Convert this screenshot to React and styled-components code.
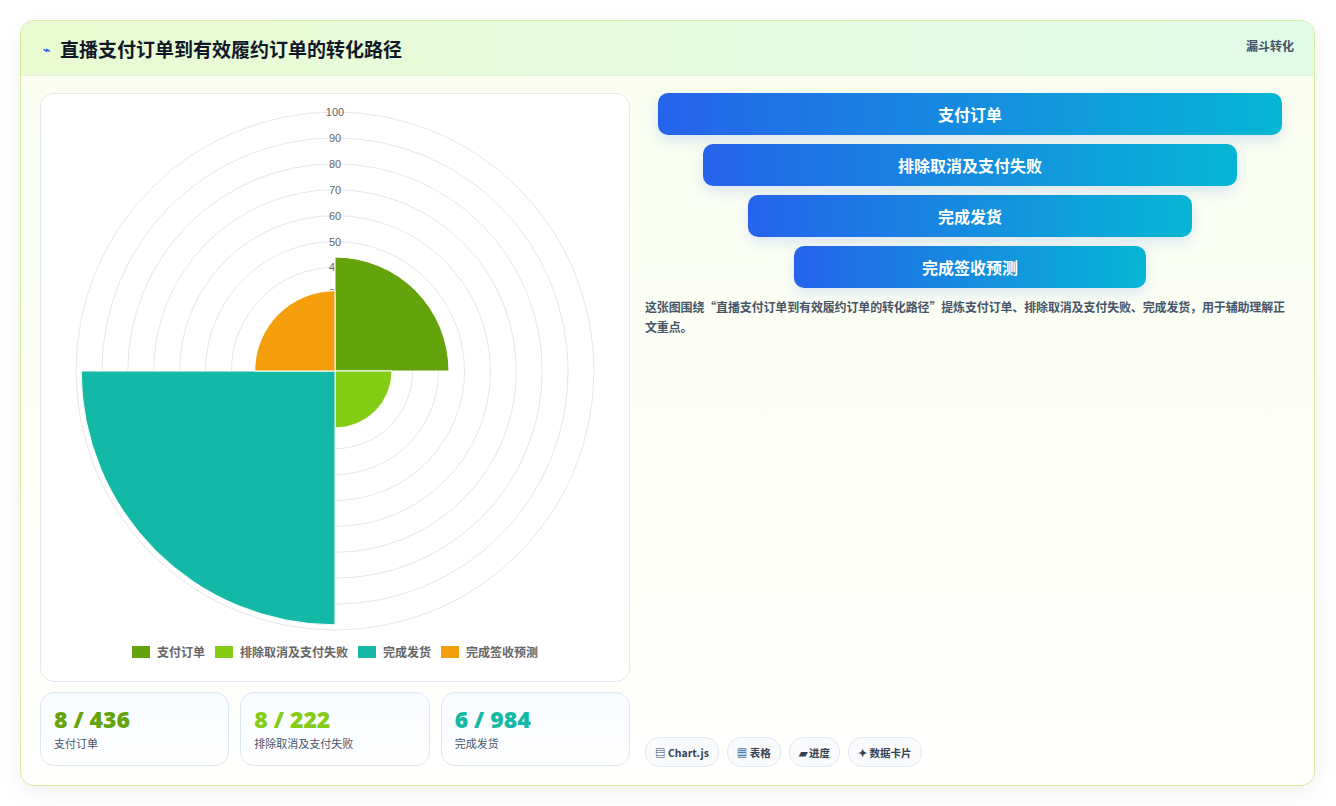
import React from "react";
import styled, { createGlobalStyle } from "styled-components";

const G = createGlobalStyle`
  body{margin:0;background:#fff;font-family:"Noto Sans CJK SC","Noto Sans",sans-serif;}
`;
const Page = styled.div`padding:20px 21px 20px 20px;`;
const Card = styled.div`
  border:1px solid #d4ec9c;border-radius:14px;overflow:hidden;height:766px;box-sizing:border-box;
  background:linear-gradient(180deg,#f9fdef 0%,#fdfff7 60%,#fffffd 100%);
  box-shadow:0 8px 24px rgba(0,0,0,0.06);display:flex;flex-direction:column;
`;
const Header = styled.div`
  height:54px;flex:none;display:flex;align-items:center;justify-content:space-between;
  padding:0 20px 0 22px;border-bottom:1px solid #e3f0d8;
  background:linear-gradient(90deg,#eafbd2,#e0fbe8);
`;
const Title = styled.h1`margin:0;font-size:19px;font-weight:700;color:#111827;display:flex;align-items:center;gap:10px;`;
const Tag = styled.span`font-size:12px;font-weight:700;color:#475569;align-self:flex-start;margin-top:16px;`;
const Body = styled.div`flex:1;display:grid;grid-template-columns:590px 1fr;gap:15px;padding:17px 20px 18px 19px;`;
const Left = styled.div`display:flex;flex-direction:column;gap:10px;`;
const ChartBox = styled.div`
  height:589px;border:1px solid #e2e8f0;border-radius:14px;background:#fff;box-sizing:border-box;
  display:flex;flex-direction:column;align-items:center;
`;
const Legend = styled.div`display:flex;gap:10px;font-size:12px;font-weight:700;color:#666;margin-top:4px;`;
const LItem = styled.span`display:flex;align-items:center;gap:7px;`;
const Sw = styled.i`width:18px;height:12px;background:${p=>p.c};display:inline-block;`;
const Stats = styled.div`display:grid;grid-template-columns:repeat(3,1fr);gap:11px;`;
const Stat = styled.div`
  height:74px;border:1px solid #dbe7f3;border-radius:14px;box-sizing:border-box;padding:12px 13px;
  background:linear-gradient(180deg,#f8fbff,#fff);
`;
const Num = styled.div`font-family:"Open Sans",sans-serif;font-size:23px;font-weight:800;color:${p=>p.c};line-height:28px;`;
const SLabel = styled.div`font-size:11px;color:#475569;margin-top:2px;`;
const Right = styled.div`display:flex;flex-direction:column;`;
const Funnel = styled.div`display:flex;flex-direction:column;align-items:center;gap:9px;padding:0 12px 0 13px;`;
const Bar = styled.div`
  height:42px;border-radius:10px;color:#fff;font-weight:700;font-size:16px;display:flex;align-items:center;justify-content:center;
  background:linear-gradient(90deg,#2563eb,#06b6d4);box-shadow:0 6px 14px rgba(37,99,235,0.15);
`;
const Desc = styled.p`margin:9px 0 0;font-size:12px;letter-spacing:-0.15px;line-height:20px;color:#475569;font-weight:700;`;
const Chips = styled.div`margin-top:auto;display:flex;gap:8px;`;
const Chip = styled.span`
  height:28px;padding:0 9px;border:1px solid #e2e8f0;border-radius:14px;background:#f8fafc;
  font-size:10.5px;font-weight:700;color:#334155;display:flex;align-items:center;gap:3px;
`;

const cx=294, cy=277, R=259;
const rr=v=>v/100*R;
function sector(r,a0,a1){const p=a=>[cx+r*Math.sin(a*Math.PI/180),cy-r*Math.cos(a*Math.PI/180)];const [x0,y0]=p(a0),[x1,y1]=p(a1);return `M${cx},${cy}L${x0},${y0}A${r},${r} 0 0 1 ${x1},${y1}Z`;}

function Chart(){
  const data=[[44,"#65a30d"],[22,"#84cc16"],[98,"#14b8a6"],[31,"#f59e0b"]];
  return (
    <svg width="588" height="545" viewBox="0 0 588 545">
      {Array.from({length:10},(_,i)=><circle key={i} cx={cx} cy={cy} r={rr((i+1)*10)} fill="none" stroke="#e5e7eb" strokeWidth="1"/>)}
      {Array.from({length:10},(_,i)=>{const v=(i+1)*10;return <text key={v} x={cx} y={cy-rr(v)+4} textAnchor="middle" fontSize="11" fill="#666" fontFamily="Liberation Sans, sans-serif">{v}</text>;})}
      {data.map(([v,c],i)=><path key={i} d={sector(rr(v),i*90,i*90+90)} fill={c} stroke="#fff" strokeWidth="1"/>)}
    </svg>
  );
}

export default function App(){
  return (<Page><G/><Card>
    <Header><Title><span style={{color:"#2563eb",fontSize:12}}>⌁</span>直播支付订单到有效履约订单的转化路径</Title><Tag>漏斗转化</Tag></Header>
    <Body>
      <Left>
        <ChartBox>
          <Chart/>
          <Legend>
            <LItem><Sw c="#65a30d"/>支付订单</LItem>
            <LItem><Sw c="#84cc16"/>排除取消及支付失败</LItem>
            <LItem><Sw c="#14b8a6"/>完成发货</LItem>
            <LItem><Sw c="#f59e0b"/>完成签收预测</LItem>
          </Legend>
        </ChartBox>
        <Stats>
          <Stat><Num c="#65a30d">8 / 436</Num><SLabel>支付订单</SLabel></Stat>
          <Stat><Num c="#84cc16">8 / 222</Num><SLabel>排除取消及支付失败</SLabel></Stat>
          <Stat><Num c="#14b8a6">6 / 984</Num><SLabel>完成发货</SLabel></Stat>
        </Stats>
      </Left>
      <Right>
        <Funnel>
          <Bar style={{width:"100%"}}>支付订单</Bar>
          <Bar style={{width:"85.5%"}}>排除取消及支付失败</Bar>
          <Bar style={{width:"71%"}}>完成发货</Bar>
          <Bar style={{width:"56.5%"}}>完成签收预测</Bar>
        </Funnel>
        <Desc>这张图围绕“直播支付订单到有效履约订单的转化路径”提炼支付订单、排除取消及支付失败、完成发货，用于辅助理解正文重点。</Desc>
        <Chips>
          <Chip>▤ Chart.js</Chip><Chip>▦ 表格</Chip><Chip>▰ 进度</Chip><Chip>✦ 数据卡片</Chip>
        </Chips>
      </Right>
    </Body>
  </Card></Page>);
}
